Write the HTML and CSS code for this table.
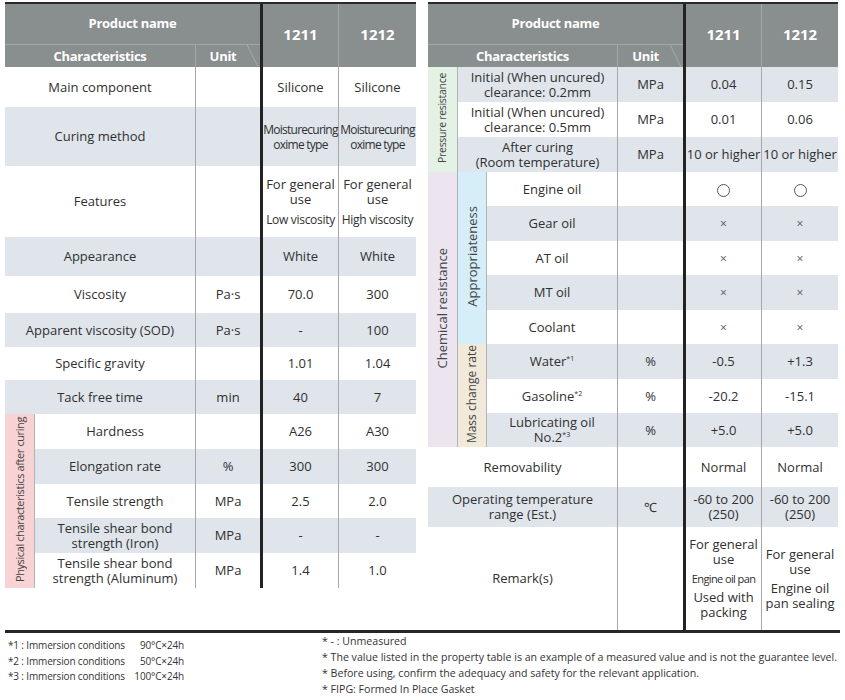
FILE: index.html
```html
<!DOCTYPE html>
<html lang="en">
<head>
<meta charset="utf-8">
<title>Property table 1211 / 1212</title>
<link rel="stylesheet" href="styles.css">
</head>
<body>
<div class="sheet">
  <div class="tables">
    <table class="spec spec-left">
      <colgroup><col class="c-lab"><col class="c-char-l"><col class="c-unit"><col class="c-val"><col class="c-val"></colgroup>
      <thead>
        <tr class="h1"><th colspan="3" class="pn">Product name</th><th rowspan="2" class="num first">1211</th><th rowspan="2" class="num sep">1212</th></tr>
        <tr class="h2"><th colspan="2" class="chr">Characteristics</th><th class="unit-h">Unit<svg class="tab" width="16" height="23" viewBox="0 0 16 23"><path d="M0 0.5 H3 L14 23" fill="none" stroke="#a4a8a8" stroke-width="1"/></svg></th></tr>
      </thead>
      <tbody>
        <tr class="r40"><td colspan="2" class="name">Main component</td><td class="u"></td><td class="v first">Silicone</td><td class="v">Silicone</td></tr>
        <tr class="r59 alt"><td colspan="2" class="name">Curing method</td><td class="u"></td><td class="v first"><span class="cond">Moisturecuring<br>oxime type</span></td><td class="v"><span class="cond">Moisturecuring<br>oxime type</span></td></tr>
        <tr class="r71"><td colspan="2" class="name">Features</td><td class="u"></td><td class="v first">For general<br>use<span class="sub">Low viscosity</span></td><td class="v">For general<br>use<span class="sub">High viscosity</span></td></tr>
        <tr class="r39 alt"><td colspan="2" class="name">Appearance</td><td class="u"></td><td class="v first">White</td><td class="v">White</td></tr>
        <tr class="r37"><td colspan="2" class="name">Viscosity</td><td class="u">Pa·s</td><td class="v first">70.0</td><td class="v">300</td></tr>
        <tr class="r34 alt"><td colspan="2" class="name">Apparent viscosity (SOD)</td><td class="u">Pa·s</td><td class="v first">-</td><td class="v">100</td></tr>
        <tr class="r33"><td colspan="2" class="name">Specific gravity</td><td class="u"></td><td class="v first">1.01</td><td class="v">1.04</td></tr>
        <tr class="r34 alt"><td colspan="2" class="name">Tack free time</td><td class="u">min</td><td class="v first">40</td><td class="v">7</td></tr>
        <tr class="r35"><td rowspan="5" class="lab pink"><span class="vt vt-phys">Physical characteristics after curing</span></td><td class="name">Hardness</td><td class="u"></td><td class="v first">A26</td><td class="v">A30</td></tr>
        <tr class="r35 alt"><td class="name">Elongation rate</td><td class="u">%</td><td class="v first">300</td><td class="v">300</td></tr>
        <tr class="r34"><td class="name">Tensile strength</td><td class="u">MPa</td><td class="v first">2.5</td><td class="v">2.0</td></tr>
        <tr class="r35 alt"><td class="name">Tensile shear bond<br>strength (Iron)</td><td class="u">MPa</td><td class="v first">-</td><td class="v">-</td></tr>
        <tr class="r35"><td class="name">Tensile shear bond<br>strength (Aluminum)</td><td class="u">MPa</td><td class="v first">1.4</td><td class="v">1.0</td></tr>
      </tbody>
    </table>

    <table class="spec spec-right">
      <colgroup><col class="c-lab"><col class="c-lab2"><col class="c-char-r"><col class="c-unit"><col class="c-val"><col class="c-val"></colgroup>
      <thead>
        <tr class="h1"><th colspan="4" class="pn">Product name</th><th rowspan="2" class="num first">1211</th><th rowspan="2" class="num sep">1212</th></tr>
        <tr class="h2"><th colspan="3" class="chr">Characteristics</th><th class="unit-h">Unit<svg class="tab" width="16" height="23" viewBox="0 0 16 23"><path d="M0 0.5 H3 L14 23" fill="none" stroke="#a4a8a8" stroke-width="1"/></svg></th></tr>
      </thead>
      <tbody>
        <tr class="r35 alt"><td rowspan="3" class="lab green"><span class="vt vt-press">Pressure resistance</span></td><td colspan="2" class="name">Initial (When uncured)<br>clearance: 0.2mm</td><td class="u">MPa</td><td class="v first">0.04</td><td class="v">0.15</td></tr>
        <tr class="r35"><td colspan="2" class="name">Initial (When uncured)<br>clearance: 0.5mm</td><td class="u">MPa</td><td class="v first">0.01</td><td class="v">0.06</td></tr>
        <tr class="r35 alt"><td colspan="2" class="name">After curing<br>(Room temperature)</td><td class="u">MPa</td><td class="v first">10 or higher</td><td class="v">10 or higher</td></tr>
        <tr class="r34"><td rowspan="8" class="lab lilac"><span class="vt vt-chem">Chemical resistance</span></td><td rowspan="5" class="lab cyan"><span class="vt vt-appr">Appropriateness</span></td><td class="name">Engine oil</td><td class="u"></td><td class="v first"><span class="circle"></span></td><td class="v"><span class="circle"></span></td></tr>
        <tr class="r35 alt"><td class="name">Gear oil</td><td class="u"></td><td class="v first x">×</td><td class="v x">×</td></tr>
        <tr class="r34"><td class="name">AT oil</td><td class="u"></td><td class="v first x">×</td><td class="v x">×</td></tr>
        <tr class="r35 alt"><td class="name">MT oil</td><td class="u"></td><td class="v first x">×</td><td class="v x">×</td></tr>
        <tr class="r34"><td class="name">Coolant</td><td class="u"></td><td class="v first x">×</td><td class="v x">×</td></tr>
        <tr class="r35 alt"><td rowspan="3" class="lab beige"><span class="vt vt-mass">Mass change rate</span></td><td class="name">Water<sup>*1</sup></td><td class="u">%</td><td class="v first">-0.5</td><td class="v">+1.3</td></tr>
        <tr class="r34"><td class="name">Gasoline<sup>*2</sup></td><td class="u">%</td><td class="v first">-20.2</td><td class="v">-15.1</td></tr>
        <tr class="r34 alt"><td class="name">Lubricating oil<br>No.2<sup>*3</sup></td><td class="u">%</td><td class="v first">+5.0</td><td class="v">+5.0</td></tr>
        <tr class="r40"><td colspan="3" class="name">Removability</td><td class="u"></td><td class="v first">Normal</td><td class="v">Normal</td></tr>
        <tr class="r40 alt"><td colspan="3" class="name">Operating temperature<br>range (Est.)</td><td class="u">℃</td><td class="v first">-60 to 200<br>(250)</td><td class="v">-60 to 200<br>(250)</td></tr>
        <tr class="r103"><td colspan="3" class="name">Remark(s)</td><td class="u"></td>
          <td class="v first"><span class="blk">For general<br>use</span><span class="blk cond-sm">Engine oil pan</span><span class="blk">Used with<br>packing</span></td>
          <td class="v"><span class="blk">For general<br>use</span><span class="blk">Engine oil<br>pan sealing</span></td></tr>
      </tbody>
    </table>
  </div>

  <div class="notes">
    <ul class="notes-left">
      <li><span class="nk">*1 : Immersion conditions</span><span class="nv">90°C×24h</span></li>
      <li><span class="nk">*2 : Immersion conditions</span><span class="nv">50°C×24h</span></li>
      <li><span class="nk">*3 : Immersion conditions</span><span class="nv">100°C×24h</span></li>
    </ul>
    <ul class="notes-right">
      <li>* - : Unmeasured</li>
      <li>* The value listed in the property table is an example of a measured value and is not the guarantee level.</li>
      <li>* Before using, confirm the adequacy and safety for the relevant application.</li>
      <li>* FIPG: Formed In Place Gasket</li>
    </ul>
  </div>
</div>
</body>
</html>
```

FILE: styles.css
```css
* { box-sizing: border-box; }

html, body { margin: 0; padding: 0; background: #fff; }

body {
  font-family: "Open Sans", "Noto Sans", sans-serif;
  color: #303030;
  font-size: 13px;
}

.sheet {
  width: 845px;
  padding: 2px 5px 0 5px;
}

.tables {
  display: flex;
  align-items: flex-start;
  gap: 12px;
  border-bottom: 3px solid #262626;
}

.spec {
  border-collapse: separate;
  border-spacing: 0;
  table-layout: fixed;
  border-top: 2px solid #2a2a2a;
}

.spec-left { width: 411px; }
.spec-right { width: 410px; }

.c-lab { width: 30px; }
.c-lab2 { width: 29px; }
.c-char-l { width: 161px; }
.c-char-r { width: 131px; }
.c-unit { width: 64px; }
.spec-right .c-unit { width: 65px; }
.c-val { width: 78px; }
.spec-right .c-val:last-child { width: 77px; }

.spec th, .spec td {
  padding: 0;
  text-align: center;
  vertical-align: middle;
  line-height: 15px;
}

/* header */
.spec th {
  background: #898e8e;
  color: #fff;
  font-weight: 700;
}

.h1 { height: 41px; }
.h2 { height: 22px; }

.h1 .pn {
  font-size: 13px;
  letter-spacing: -0.3px;
  border-bottom: 1px solid #a4a8a8;
  padding-bottom: 2px;
}

.h2 th { font-size: 13px; letter-spacing: -0.3px; padding-top: 1px; }

.chr { border-right: 1px solid #a4a8a8; }

.unit-h {
  position: relative;
  padding-right: 10px !important;
}

.unit-h .tab {
  position: absolute;
  right: 0;
  top: -1px;
}

.num {
  font-size: 15px;
  padding-bottom: 2px !important;
}

.num.sep { border-left: 1px solid #a4a8a8; }

.first { border-left: 3px solid #232323; }

/* body */
.spec td { background: #fff; }
.spec tr.alt td { background: #dfe5eb; }

.r33 { height: 33px; }
.r34 { height: 34px; }
.r35 { height: 35px; }
.r37 { height: 37px; }
.r39 { height: 39px; }
.r40 { height: 40px; }
.r59 { height: 59px; }
.r71 { height: 71px; }
.r103 { height: 103px; }

.name { border-right: 1px solid #a7a7a7; }
.v + .v { border-left: 1px solid #a7a7a7; }

.lab { border-right: 1px solid #b3b3b3; color: #444; }
.spec tr td.pink { background: #f7d3d5; }
.spec tr td.green { background: #e4f2e5; }
.spec tr td.lilac { background: #ece5f0; }
.spec tr td.cyan { background: #d5eef8; }
.spec tr td.beige { background: #f1eadb; }

.vt {
  display: inline-block;
  writing-mode: vertical-rl;
  transform: rotate(180deg);
  white-space: nowrap;
  line-height: 1;
}

.vt-phys { font-size: 11px; letter-spacing: -0.4px; }
.vt-press { font-size: 10.5px; letter-spacing: -0.3px; }
.vt-chem { font-size: 13px; }
.vt-appr { font-size: 13px; }
.vt-mass { font-size: 12px; }

.cond {
  display: inline-block;
  font-size: 12px;
  letter-spacing: -0.75px;
  line-height: 15px;
  white-space: nowrap;
}

.sub {
  display: block;
  font-size: 12px;
  letter-spacing: -0.3px;
  margin-top: 5px;
}

.x { font-size: 12px; color: #555; }

.circle {
  display: inline-block;
  width: 13px;
  height: 13px;
  border: 1px solid #555;
  border-radius: 50%;
  vertical-align: middle;
}

sup {
  font-size: 7px;
  line-height: 0;
  vertical-align: 5px;
}

.blk { display: block; }
.blk + .blk { margin-top: 4px; }
.cond-sm { font-size: 11px; letter-spacing: -0.6px; }

/* notes */
.notes {
  display: flex;
  color: #333;
}

.notes ul {
  list-style: none;
  margin: 0;
  padding: 0;
}

.notes-left {
  width: 317px;
  padding: 5px 0 0 3px !important;
  font-size: 10px;
  letter-spacing: -0.15px;
  line-height: 15.5px;
}

.notes-left li { display: flex; width: 176px; }
.nk { flex: 1; }
.nv { text-align: right; }

.notes-right {
  font-size: 10.6px;
  line-height: 16px;
}
```
